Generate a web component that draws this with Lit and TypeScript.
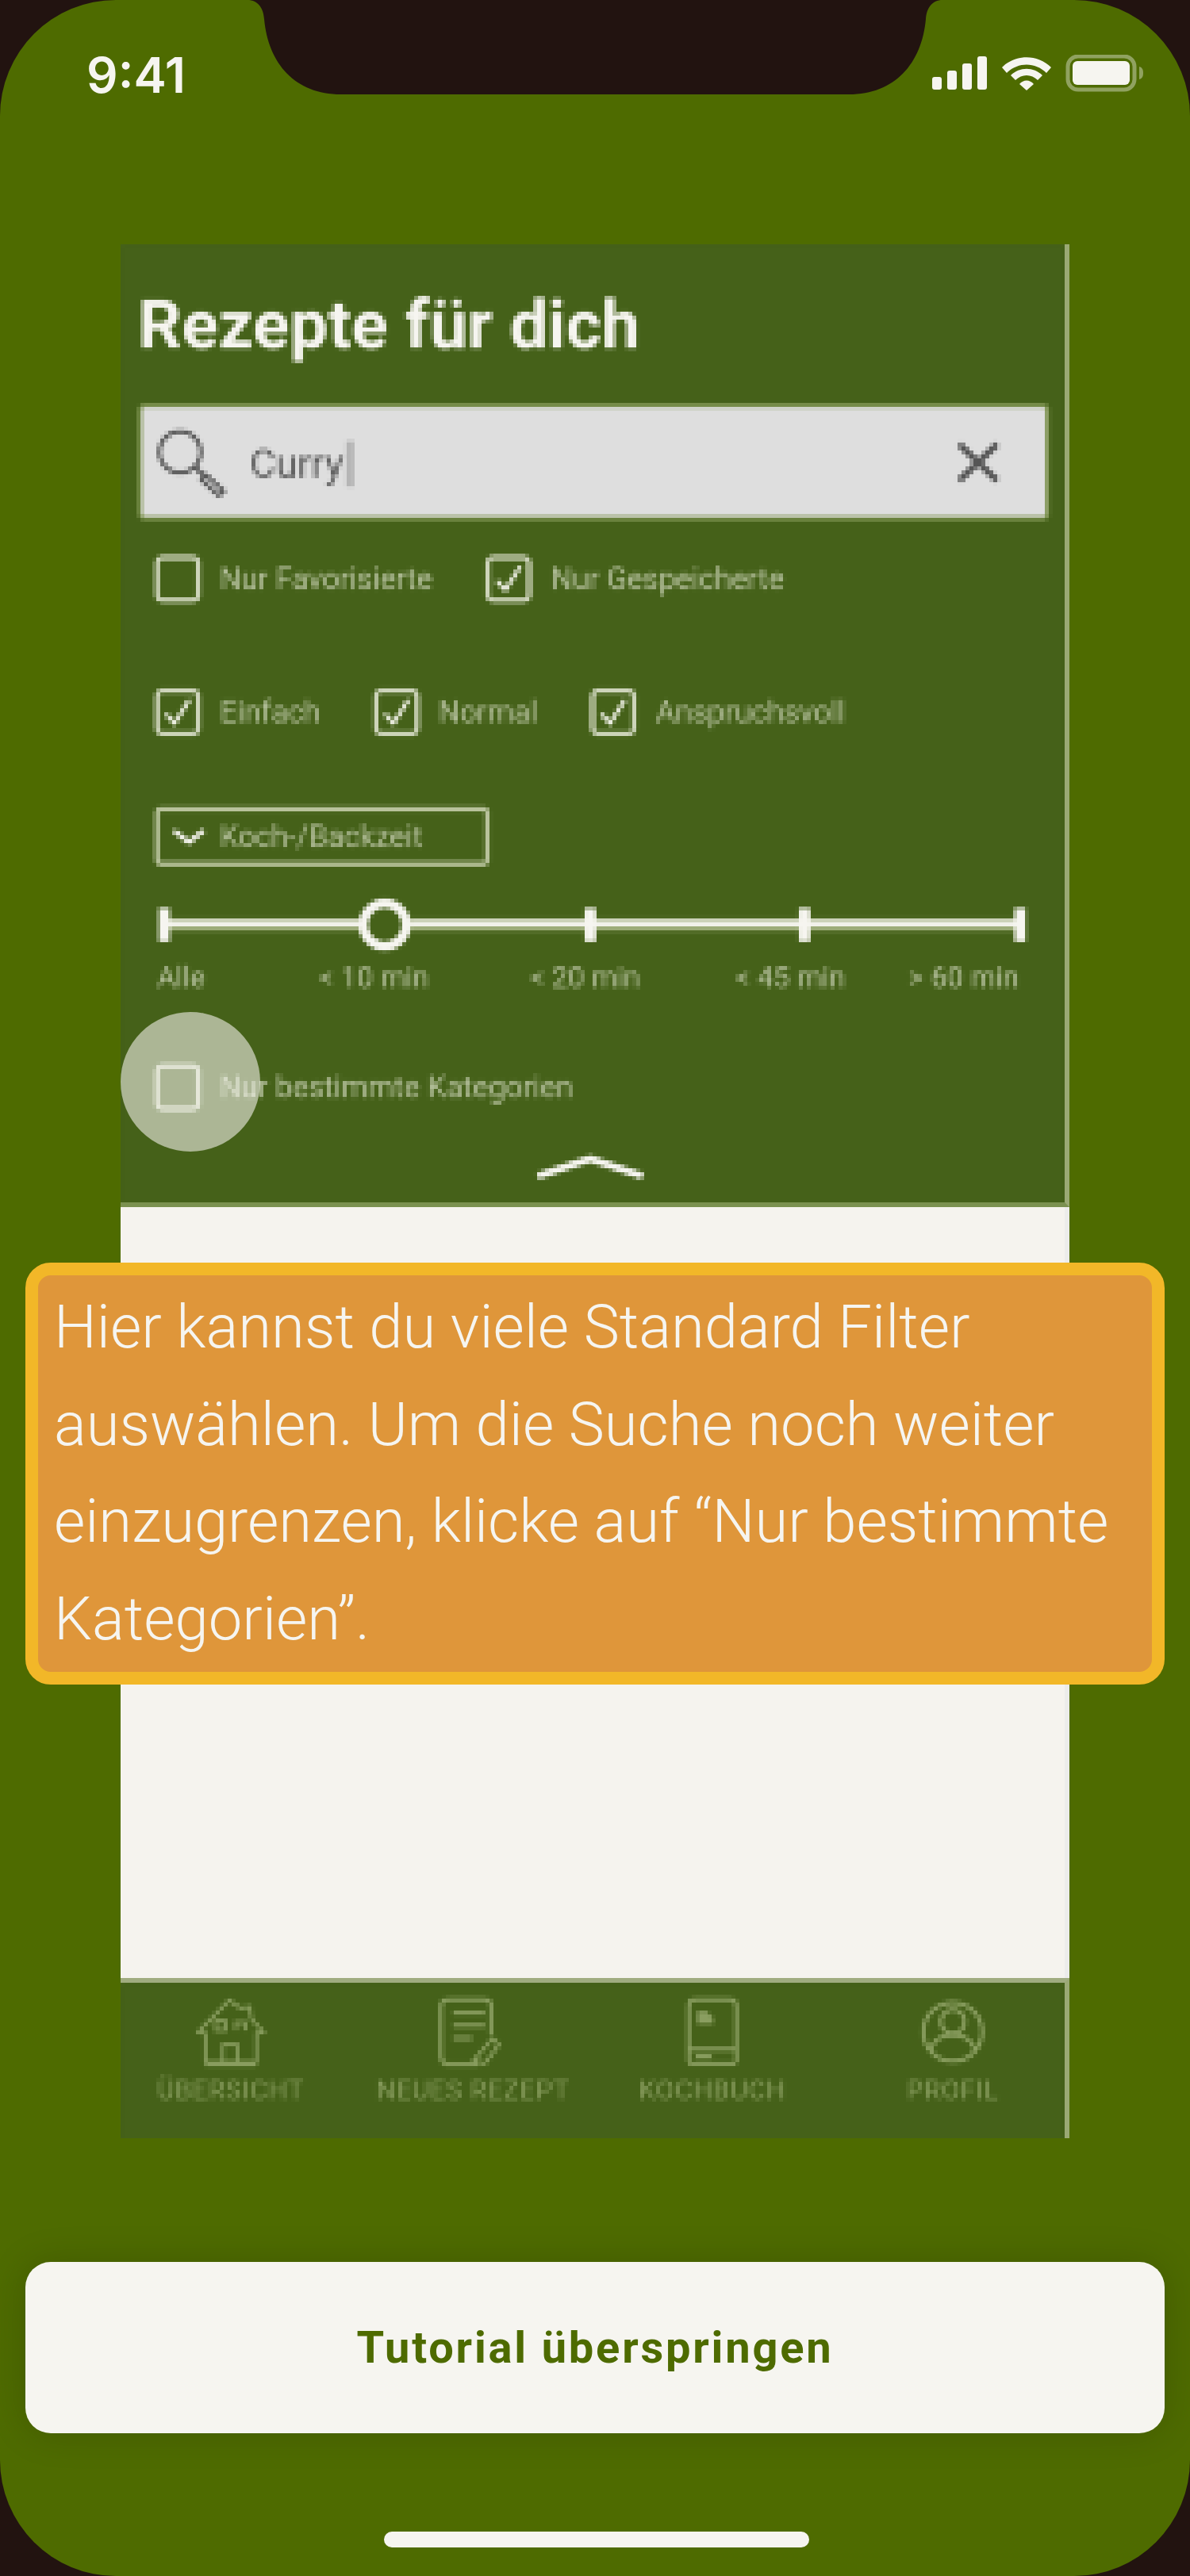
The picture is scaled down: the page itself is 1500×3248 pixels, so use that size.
import { LitElement, css, html, svg } from "lit";
import { customElement } from "lit/decorators.js";

const SLIDER_SEGMENTS = [238, 219, 256, 258];
const SLIDER_LABELS = ["Alle", "< 10 min", "< 20 min", "< 45 min", "> 60 min"];

const check = svg`<path d="M8 26l11 12 19-30" fill="none" stroke="#eef0e4" stroke-width="5"/>`;

@customElement("app-root")
export class AppRoot extends LitElement {
  static styles = css`
    :host {
      display: block;
      width: 1500px;
      height: 3248px;
      background: #221310;
      font-family: Roboto, "Liberation Sans", sans-serif;
    }

    .phone {
      position: relative;
      height: 3248px;
      border-radius: 146px;
      background: #4e6b00;
      overflow: hidden;
    }

    .defs {
      position: absolute;
      width: 0;
      height: 0;
    }

    .notch {
      position: absolute;
      left: 0;
      top: 0;
      display: block;
    }

    .status {
      display: flex;
      align-items: flex-start;
      height: 308px;
      padding: 64px 59px 0 109px;
      box-sizing: border-box;
      color: #f6f5f0;
    }

    .time {
      flex: 1;
      font: 600 62px/62px Inter, sans-serif;
    }

    .status-icons {
      display: block;
      margin-top: 5px;
    }

    .screen {
      position: relative;
      width: 1196px;
      margin-left: 152px;
    }

    .panel {
      height: 1214px;
      box-sizing: border-box;
      background: #456119;
      border-right: 6px solid #9aa974;
      border-bottom: 6px solid #7b9150;
    }

    .shot {
      height: 1208px;
      padding: 52px 0 0 22px;
      box-sizing: border-box;
      background: #456119;
      color: #b8c3a0;
      filter: url(#lowres);
    }

    .title {
      height: 100px;
      font-size: 86px;
      font-weight: 700;
      line-height: 100px;
      color: #f6f5f0;
    }

    .search {
      display: flex;
      align-items: center;
      width: 1149px;
      height: 147px;
      margin-top: 49px;
      padding: 0 58px 0 19px;
      box-sizing: border-box;
      border: 5px solid #7e9350;
      border-radius: 8px;
      background: #dedede;
      color: #555;
    }

    .query {
      margin: 4px 0 0 27px;
      font-size: 50px;
    }

    .caret {
      width: 10px;
      height: 58px;
      margin: 4px 0 0 3px;
      background: #b5b5b5;
    }

    .clear {
      display: block;
      margin-left: auto;
    }

    .row {
      display: flex;
      align-items: center;
      height: 60px;
      margin-left: 21px;
    }

    .row-a {
      margin-top: 44px;
    }

    .row-b {
      margin-top: 108px;
    }

    .row-c {
      margin-top: 88px;
    }

    .option {
      display: flex;
      align-items: center;
      margin-right: 67px;
      font-size: 38px;
      white-space: nowrap;
    }

    .box {
      display: block;
      width: 58px;
      height: 60px;
      margin-right: 24px;
      box-sizing: border-box;
      border: 6px solid #d2d8c0;
      border-radius: 10px;
    }

    .dropdown {
      display: flex;
      align-items: center;
      width: 422px;
      height: 75px;
      margin: 89px 0 0 21px;
      padding-left: 16px;
      box-sizing: border-box;
      border: 6px solid #bcc6a0;
      border-radius: 8px;
      font-size: 38px;
    }

    .dropdown svg {
      margin-right: 18px;
    }

    .track {
      display: flex;
      align-items: center;
      height: 66px;
      margin: 41px 0 0 26px;
    }

    .tick {
      flex: none;
      width: 14px;
      height: 42px;
      background: #f6f5f0;
    }

    .segment {
      flex: none;
      height: 16px;
      background: linear-gradient(#d0d5bd 0 5px, #f6f5f0 5px 10px, #9aa974 10px);
    }

    .knob {
      flex: none;
      width: 66px;
      height: 66px;
      box-sizing: border-box;
      border: 12px solid #f6f5f0;
      border-radius: 50%;
    }

    .labels {
      display: grid;
      grid-template-columns: 204px 266px 259px 218px auto;
      height: 40px;
      margin: 14px 0 0 24px;
      font-size: 36.5px;
      line-height: 40px;
      white-space: nowrap;
    }

    .more {
      display: block;
      margin: 54px 0 0 502px;
      color: #f6f5f0;
    }

    .spot {
      position: absolute;
      left: 0;
      top: 968px;
      width: 176px;
      height: 176px;
      border-radius: 50%;
      background: rgba(246, 245, 240, 0.58);
    }

    .results {
      height: 972px;
      box-sizing: border-box;
      background: #f5f3ee;
      border-right: 6px solid #ececea;
    }

    .nav {
      height: 202px;
      box-sizing: border-box;
      background: #456119;
      border-top: 6px solid #a0ac80;
      border-right: 6px solid #9aa974;
    }

    .tabs {
      display: flex;
      height: 196px;
      padding: 18px 0 0 46px;
      box-sizing: border-box;
      background: #456119;
      color: #8a9e60;
      filter: url(#lowres);
    }

    .tab {
      display: flex;
      flex-direction: column;
      align-items: center;
      margin-right: 91px;
      font-size: 33.5px;
      line-height: 36px;
      letter-spacing: 1px;
      white-space: nowrap;
    }

    .tab:nth-child(2) {
      margin-right: 87px;
    }

    .tab:nth-child(3) {
      margin-right: 152px;
    }

    .tab svg {
      display: block;
      height: 88px;
      margin-bottom: 12px;
    }

    .tab svg.note {
      margin-right: 8px;
    }

    .callout {
      position: absolute;
      left: 32px;
      top: 1592px;
      width: 1436px;
      height: 532px;
      padding: 4px 20px 0;
      box-sizing: border-box;
      border: 16px solid #f2b728;
      border-radius: 32px;
      background: #df963a;
      color: #f6f5f0;
      font-size: 76px;
      font-weight: 300;
      line-height: 122.5px;
    }

    .skip {
      display: flex;
      align-items: center;
      justify-content: center;
      height: 216px;
      margin: 156px 32px 0;
      border-radius: 32px;
      background: #f6f5f0;
      box-shadow: 0 0 48px rgba(0, 0, 0, 0.16);
      color: #4e6b00;
      font-size: 56px;
      font-weight: 700;
      letter-spacing: 2.8px;
    }

    .home {
      width: 536px;
      height: 20px;
      margin: 124px 0 0 484px;
      border-radius: 10px;
      background: #f6f5f0;
    }
  `;

  private option(label: string, checked: boolean) {
    return html`<div class="option">
      <svg class="box" viewBox="0 0 46 48">${checked ? check : ""}</svg>${label}
    </div>`;
  }

  private slider() {
    const [a, b, c, d] = SLIDER_SEGMENTS;
    const seg = (w: number) => html`<div class="segment" style="width:${w}px"></div>`;
    return html`<div class="track">
      <div class="tick"></div>
      ${seg(a)}
      <div class="knob"></div>
      ${seg(b)}
      <div class="tick"></div>
      ${seg(c)}
      <div class="tick"></div>
      ${seg(d)}
      <div class="tick"></div>
    </div>`;
  }

  render() {
    return html`<div class="phone">
      <svg class="defs">
        <filter id="lowres" x="0" y="0" width="1" height="1" color-interpolation-filters="sRGB">
          <feGaussianBlur in="SourceGraphic" stdDeviation="1.5" result="soft" />
          <feFlood x="2" y="2" width="1" height="1" flood-color="#000" />
          <feComposite width="5" height="5" />
          <feTile result="grid" />
          <feComposite in="soft" in2="grid" operator="in" />
          <feMorphology operator="dilate" radius="2" />
          <feGaussianBlur stdDeviation="0.4" />
        </filter>
      </svg>

      <svg class="notch" width="1500" height="120" viewBox="0 0 1500 120">
        <path
          d="M312 0C325 0 332 10 333 24C338 80 372 119 430 119H1070C1128 119 1162 80 1167 24C1168 10 1175 0 1188 0Z"
          fill="#221310"
        />
      </svg>

      <div class="status">
        <div class="time">9:41</div>
        <svg class="status-icons" width="271" height="48" viewBox="0 0 271 48" fill="currentColor">
          <rect x="5" y="28" width="12" height="16" rx="3" />
          <rect x="24" y="20" width="12" height="24" rx="3" />
          <rect x="43" y="11" width="12" height="33" rx="3" />
          <rect x="62" y="2" width="12" height="42" rx="3" />
          <path d="M93 13C110 -4 138 -4 155 13L149 20C135 6 113 6 99 20Z" transform="translate(0 3)" />
          <path d="M104 26C115 15 133 15 144 26L138 32C130 24 118 24 110 32Z" />
          <path d="M115 37C120 31 128 31 133 37L124 45Z" />
          <rect x="176" y="2" width="84" height="42" rx="13" fill="none" stroke="currentColor" stroke-width="5" opacity="0.4" />
          <rect x="182" y="8" width="72" height="30" rx="6" />
          <path d="M266 15C270 16 271 19 271 23C271 27 270 30 266 31Z" opacity="0.4" />
        </svg>
      </div>

      <div class="screen">
        <div class="panel">
          <div class="shot">
            <div class="title">Rezepte für dich</div>
            <div class="search">
              <svg width="90" height="88" viewBox="0 0 90 88" fill="none" stroke="currentColor">
                <circle cx="29" cy="31" r="26" stroke-width="5" />
                <path d="M48 50L60 62" stroke-width="6" />
                <path d="M62 60L84 80L78 86L56 66Z" stroke-width="5" />
              </svg>
              <span class="query">Curry</span>
              <div class="caret"></div>
              <svg class="clear" width="54" height="52" viewBox="0 0 54 52" fill="none" stroke="currentColor" stroke-width="8">
                <path d="M3 3L51 49M51 3L3 49" />
              </svg>
            </div>
            <div class="row row-a">
              ${this.option("Nur Favorisierte", false)} ${this.option("Nur Gespeicherte", true)}
            </div>
            <div class="row row-b">
              ${this.option("Einfach", true)} ${this.option("Normal", true)}
              ${this.option("Anspruchsvoll", true)}
            </div>
            <div class="dropdown">
              <svg width="42" height="24" viewBox="0 0 42 24" fill="none" stroke="#f6f5f0" stroke-width="6">
                <path d="M2 4L21 19L40 4" />
              </svg>
              Koch-/Backzeit
            </div>
            ${this.slider()}
            <div class="labels">${SLIDER_LABELS.map((l) => html`<span>${l}</span>`)}</div>
            <div class="row row-c">${this.option("Nur bestimmte Kategorien", false)}</div>
            <svg class="more" width="136" height="32" viewBox="0 0 136 32" fill="none" stroke="currentColor" stroke-width="9">
              <path d="M2 28L68 6L134 28" />
            </svg>
          </div>
          <div class="spot"></div>
        </div>

        <div class="results"></div>

        <div class="nav">
          <div class="tabs">
            <div class="tab">
              <svg width="88" height="88" viewBox="0 0 88 88" fill="none" stroke="currentColor" stroke-width="4">
                <path d="M3 44L42 4L56 14L68 12L70 28L85 44L76 46V82H12V46Z" />
                <rect x="25" y="30" width="12" height="12" />
                <path d="M50 42V32H62V42" />
                <path d="M34 82V60H52V82" />
                <path d="M12 84H76" stroke-width="7" />
              </svg>
              ÜBERSICHT
            </div>
            <div class="tab">
              <svg class="note" width="78" height="88" viewBox="0 0 78 88" fill="none" stroke="currentColor" stroke-width="5">
                <path d="M66 48V12Q66 3 56 3H14Q3 3 3 12V74Q3 85 14 85H50" />
                <path d="M18 20H58M18 36H58M18 52H42" />
                <path d="M44 80L68 52L76 60L58 84Z" stroke-width="4" />
              </svg>
              NEUES REZEPT
            </div>
            <div class="tab">
              <svg width="66" height="88" viewBox="0 0 66 88" fill="none" stroke="currentColor" stroke-width="5">
                <path d="M3 82V12Q3 3 12 3H54Q63 3 63 12V82" />
                <path d="M3 66H63M3 84H63" />
                <path d="M14 18H26L34 26V34H14Z" fill="currentColor" stroke="none" />
                <path d="M12 75H32" stroke-width="6" />
              </svg>
              KOCHBUCH
            </div>
            <div class="tab">
              <svg width="84" height="82" viewBox="0 0 84 82" fill="none" stroke="currentColor" stroke-width="5">
                <circle cx="42" cy="41" r="37" />
                <circle cx="42" cy="28" r="15" />
                <path d="M14 64C18 50 30 45 42 45C54 45 66 50 70 64" />
              </svg>
              PROFIL
            </div>
          </div>
        </div>
      </div>

      <div class="callout">Hier kannst du viele Standard Filter auswählen. Um die Suche noch weiter einzugrenzen, klicke auf “Nur bestimmte Kategorien”.</div>

      <div class="skip">Tutorial überspringen</div>
      <div class="home"></div>
    </div>`;
  }
}
